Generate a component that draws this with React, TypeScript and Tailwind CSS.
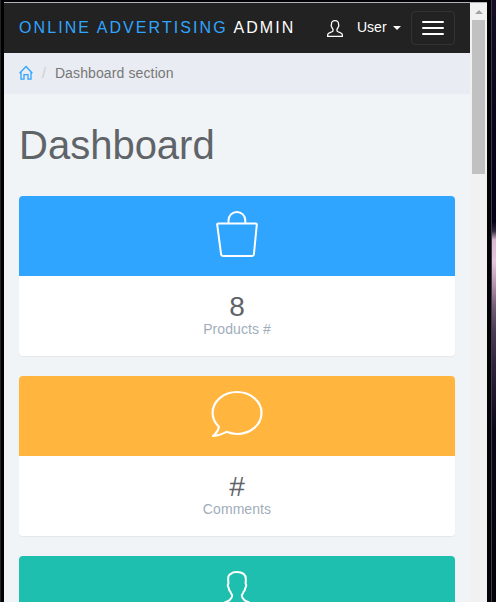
import type { ReactNode } from "react";

function HomeIcon() {
  return (
    <svg className="mb-0.5 h-[15px] w-[14px] shrink-0" viewBox="0 0 14 15" fill="none" stroke="#30a5ff" strokeWidth="1.3">
      <path d="M0.600 8.200 7 1.500l6.400 6.700M2 7.200v7h3V9.700h4v4.500h3v-7" />
    </svg>
  );
}

function UserIcon() {
  return (
    <svg className="h-[17px] w-4 shrink-0" viewBox="0 0 16 17" fill="none" stroke="#fff" strokeWidth="1.3">
      <path d="M8 .7C5.500 .7 4.400 2 4.500 4.100c0 .8-.4 1-.3 1.700.1.900.6 1.100.8 1.700.3 1 .9 1.400 1 2v1.500C5.500 12.300.7 12.600.7 14.400v1.900h14.600v-1.900c0-1.800-4.800-2.100-5.300-3.400V9.500c.1-.6.700-1 1-2 .2-.6.700-.8.800-1.700.1-.7-.3-.9-.3-1.700C11.600 2 10.500.7 8 .7Z" />
    </svg>
  );
}

function BagIcon() {
  return (
    <svg className="mt-[14px] h-12 w-[42px]" viewBox="0 0 42 48" fill="none" stroke="#fff" strokeWidth="2" strokeLinejoin="round">
      <path d="M2.200 13.500h37.600q1.200 0 1 1.200l-2.900 29.700Q37.700 46 36 46H7Q5.300 46 5.100 44.400L1.200 14.700q-.2-1.200 1-1.200Z" />
      <path d="M12.500 13.500v-3.200a8.400 8.400 0 0 1 16.800 0v3.200" />
    </svg>
  );
}

function CommentIcon() {
  return (
    <svg className="mt-[14px] h-12 w-[52px]" viewBox="0 0 52 48" fill="none" stroke="#fff" strokeWidth="2.2" strokeLinejoin="round">
      <path d="M26 2C39.500 2 50.500 11.200 50.500 23S39.500 44 26 44c-4 0-7-.8-10.300-2.200C11 44 7 46 2 46c3.200-2.600 5.200-5.400 5.900-9.300C4.100 33 1.600 28.300 1.600 23 1.600 11.200 12.500 2 26 2Z" />
    </svg>
  );
}

function PersonIcon() {
  return (
    <svg className="mt-[14px] h-12 w-[46px]" viewBox="0 0 46 48" fill="none" stroke="#fff" strokeWidth="2" strokeLinejoin="round">
      <path d="M23 2c-3.500 0-5 .6-5.800 1.700-2.400.6-3.200 2.500-3 5.800l.2 4.300c-1.200 1.200-.6 2.700.3 4.200.3 2.300.8 3.200 1.800 3.900.3 1.500.9 2.300 1.700 3.300-.1 2.300-.7 3.500-2.200 4.500C13 32.500 1 35 1 43v4h44v-4c0-8-12-10.500-15-13.300-1.500-1-2.100-2.200-2.200-4.500.8-1 1.400-1.800 1.700-3.300 1-.7 1.500-1.600 1.800-3.900.9-1.500 1.500-3 .3-4.200l.2-4.300C32.100 4.500 28.500 2 23 2Z" />
    </svg>
  );
}

function Card({ color, icon, value, label }: { color: string; icon: ReactNode; value: string; label: string }) {
  return (
    <section className="mb-5 h-40 shrink-0 overflow-hidden rounded bg-white text-center shadow-[0_1px_1px_rgba(0,0,0,0.05)]">
      <div className={`flex h-20 items-start justify-center ${color}`}>{icon}</div>
      <div className="pt-[15px] text-[28px] leading-[31px] text-[#5f6468]">{value}</div>
      <div className="text-sm leading-[15px] tracking-[0.08px] text-[#9fadbb]">{label}</div>
    </section>
  );
}

export default function App() {
  return (
    <div className="flex h-[602px] w-[496px] overflow-hidden bg-[#030308] font-['Liberation_Sans',Arial,sans-serif]">
      <div className="w-1 shrink-0 border-l border-[#26242a] bg-black" />
      <div className="flex w-[483px] shrink-0 flex-col pt-0.5">
        <div className="h-px shrink-0 bg-[#b5b2b5]" />
        <div className="flex min-h-0 flex-1">
          <main className="flex w-[466px] shrink-0 flex-col overflow-hidden bg-[#f1f4f7]">
            <header className="flex h-[50px] shrink-0 items-center bg-[#222] pr-[15px] pl-[15px] text-white">
              <div className="w-[308px] text-base leading-5 tracking-[2.08px] whitespace-nowrap">
                <span className="text-[#30a5ff]">ONLINE ADVERTISING</span> ADMIN
              </div>
              <UserIcon />
              <span className="mb-0.5 ml-[14px] text-sm leading-5">User</span>
              <span className="ml-1.5 h-0 w-0 border-x-4 border-t-4 border-x-transparent border-t-white" />
              <button className="ml-auto flex h-[34px] w-11 flex-col items-center justify-center gap-1 rounded border border-[#333]">
                <span className="h-0.5 w-[22px] rounded-[1px] bg-white" />
                <span className="h-0.5 w-[22px] rounded-[1px] bg-white" />
                <span className="h-0.5 w-[22px] rounded-[1px] bg-white" />
              </button>
            </header>
            <nav className="flex h-[41px] shrink-0 items-center bg-[#e9ecf2] pl-[15px] text-sm text-[#777]">
              <HomeIcon />
              <span className="mb-0.5 ml-[9px] text-[#ccc]">/</span>
              <span className="mb-0.5 ml-[9px] tracking-[0.12px]">Dashboard section</span>
            </nav>
            <div className="flex flex-col px-[15px]">
              <h1 className="mt-[29px] mb-[29px] text-[40px] leading-[44px] text-[#5f6468]">Dashboard</h1>
              <Card color="bg-[#30a5ff]" icon={<BagIcon />} value="8" label="Products #" />
              <Card color="bg-[#ffb53e]" icon={<CommentIcon />} value="#" label="Comments" />
              <Card color="bg-[#1ebfae]" icon={<PersonIcon />} value="" label="" />
            </div>
          </main>
          <div className="flex flex-1 flex-col items-center bg-[#f1f1f1]">
            <div className="flex h-[17px] shrink-0 items-center">
              <span className="h-0 w-0 border-x-4 border-b-4 border-x-transparent border-b-[#a3a3a3]" />
            </div>
            <div className="h-[154px] w-[13px] shrink-0 bg-[#c1c1c1]" />
          </div>
        </div>
      </div>
      <div className="w-1 shrink-0 bg-[#030306]" />
      <div className="w-px shrink-0 bg-[#3c3b41]" />
      <div className="flex-1 bg-[linear-gradient(180deg,#150e26_0px,#08061a_120px,#030218_222px,#30253c_231px,#d8b6cf_240px,#e5c5dc_262px,#b391ac_285px,#77607a_305px,#4c3c55_330px,#30243d_365px,#0b0719_430px,#030309_602px)]" />
    </div>
  );
}
